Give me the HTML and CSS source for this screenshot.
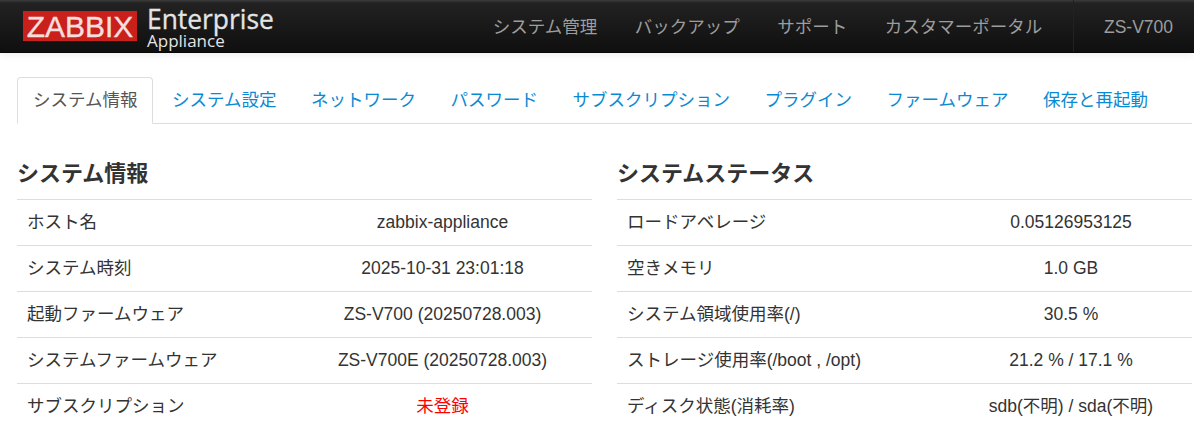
FILE: index.html
```html
<!DOCTYPE html>
<html lang="ja">

<head>
    <meta charset="UTF-8" />
    <title>システム情報</title>
    <link rel="stylesheet" href="styles.css">
</head>

<body>
    <nav class="navbar">
        <div class="brand">
            <span class="brand-logo">ZABBIX</span>
            <div class="brand-text">
                <span class="brand-name">Enterprise</span>
                <span class="brand-sub">Appliance</span>
            </div>
        </div>
        <ul class="nav-menu">
            <li>システム管理</li>
            <li>バックアップ</li>
            <li>サポート</li>
            <li>カスタマーポータル</li>
        </ul>
        <div class="nav-model">ZS-V700</div>
    </nav>

    <div class="container">
        <ul class="tabs">
            <li class="active"><a>システム情報</a></li>
            <li><a>システム設定</a></li>
            <li><a>ネットワーク</a></li>
            <li><a>パスワード</a></li>
            <li><a>サブスクリプション</a></li>
            <li><a>プラグイン</a></li>
            <li><a>ファームウェア</a></li>
            <li><a>保存と再起動</a></li>
        </ul>

        <div class="columns">
            <section class="info">
                <h3>システム情報</h3>
                <table>
                    <tr><td>ホスト名</td><td>zabbix-appliance</td></tr>
                    <tr><td>システム時刻</td><td>2025-10-31 23:01:18</td></tr>
                    <tr><td>起動ファームウェア</td><td>ZS-V700 (20250728.003)</td></tr>
                    <tr><td>システムファームウェア</td><td>ZS-V700E (20250728.003)</td></tr>
                    <tr><td>サブスクリプション</td><td class="alert">未登録</td></tr>
                </table>
            </section>
            <section class="status">
                <h3>システムステータス</h3>
                <table>
                    <tr><td>ロードアベレージ</td><td>0.05126953125</td></tr>
                    <tr><td>空きメモリ</td><td>1.0 GB</td></tr>
                    <tr><td>システム領域使用率(/)</td><td>30.5 %</td></tr>
                    <tr><td>ストレージ使用率(/boot , /opt)</td><td>21.2 % / 17.1 %</td></tr>
                    <tr><td>ディスク状態(消耗率)</td><td>sdb(不明) / sda(不明)</td></tr>
                </table>
            </section>
        </div>
    </div>
</body>

</html>
```

FILE: styles.css
```css
* {
    box-sizing: border-box;
    margin: 0;
    padding: 0;
}

html,
body {
    height: 444px;
    overflow: hidden;
}

body {
    font-family: "Liberation Sans", "Noto Sans CJK JP", sans-serif;
    font-size: 17.5px;
    line-height: 24px;
    color: #333;
    background: #fff;
}

/* Navbar */
.navbar {
    display: flex;
    align-items: stretch;
    height: 53px;
    background: linear-gradient(to bottom, #3c3c3c 0, #222 3px, #0f0f0f 100%);
    border-bottom: 1px solid #080808;
    box-shadow: 0 2px 8px rgba(0, 0, 0, 0.07);
}

.brand {
    display: flex;
    align-items: flex-start;
    width: 474px;
    padding: 11px 0 0 23px;
}

.brand-logo {
    width: 114px;
    height: 30px;
    background: #c9201b;
    color: #f4dede;
    font-size: 30px;
    line-height: 31px;
    text-align: center;
    -webkit-text-stroke: 0.4px #f4dede;
}

.brand-text {
    display: flex;
    flex-direction: column;
    margin: -6px 0 0 10px;
    color: #e4e4e4;
}

.brand-name {
    font-family: "Open Sans", sans-serif;
    font-size: 26.4px;
    line-height: 28px;
    -webkit-text-stroke: 0.3px #e4e4e4;
}

.brand-sub {
    font-family: "Open Sans", sans-serif;
    font-size: 17px;
    line-height: 17px;
    margin-top: -1px;
}

.nav-menu {
    display: flex;
    list-style: none;
    width: 599px;
}

.nav-menu li {
    padding: 15px 18.75px;
    color: #9d9d9d;
    white-space: nowrap;
}

.nav-model {
    flex: 1;
    padding-top: 15px;
    padding-left: 30px;
    color: #9d9d9d;
    border-left: 1px solid #222;
}

/* Tabs */
.container {
    padding: 24px 2px 0 17px;
}

.tabs {
    display: flex;
    list-style: none;
    height: 47px;
    border-bottom: 1px solid #ddd;
}

.tabs li a {
    display: block;
    height: 47px;
    padding: 10px 15px;
    margin-right: 2.5px;
    color: #0a8ad2;
    border: 1px solid transparent;
    border-radius: 4px 4px 0 0;
    white-space: nowrap;
}

.tabs li.active a {
    color: #555;
    background: #fff;
    border-color: #ddd #ddd #fff;
}

/* Info tables */
.columns {
    display: grid;
    grid-template-columns: 575px 575px;
    column-gap: 25px;
    margin-top: 26px;
}

h3 {
    font-size: 22px;
    line-height: 48px;
    height: 49px;
    font-weight: 700;
}

table {
    width: 100%;
    border-collapse: collapse;
}

td {
    height: 46px;
    padding: 0 10px 2px;
    border-top: 1px solid #ddd;
    vertical-align: middle;
    white-space: nowrap;
}

.info td:first-child {
    width: 276px;
}

.status td:first-child {
    width: 333px;
}

td:last-child {
    text-align: center;
}

td.alert {
    color: #f00;
}
```
